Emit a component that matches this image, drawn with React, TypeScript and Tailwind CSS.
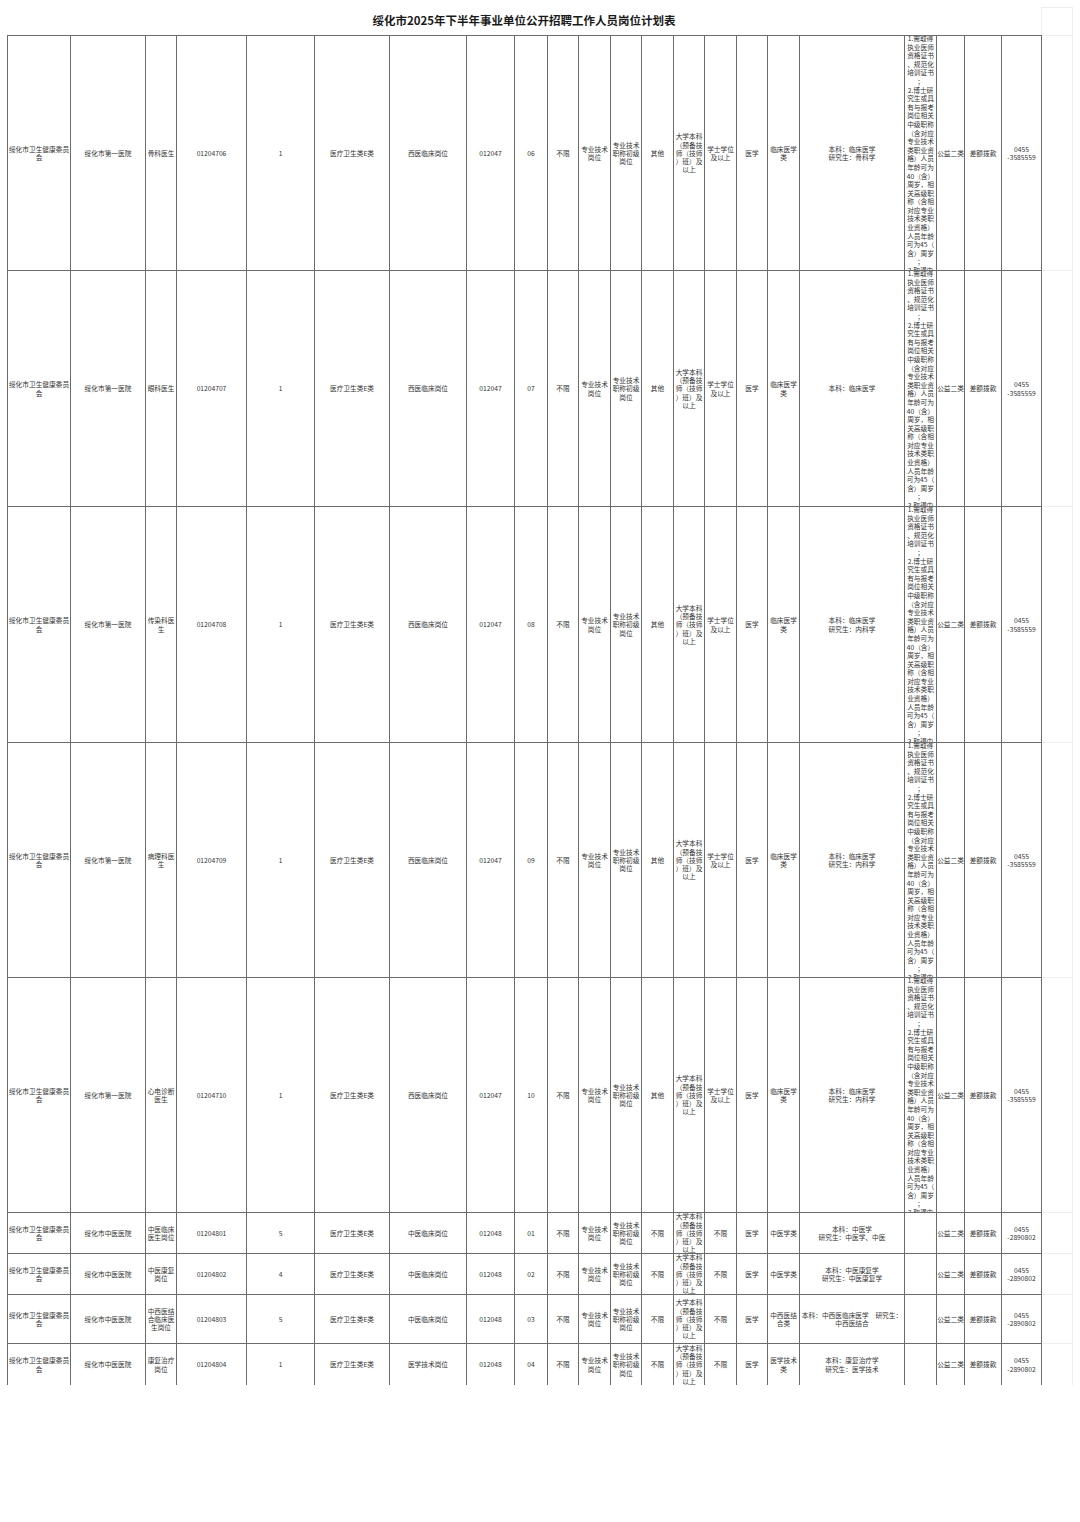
import type { FC } from "react";

type Row = string[][];

const font = { fontFamily: '"Noto Sans CJK SC", "Noto Sans", sans-serif' };

const remark = [
  "1.需取得", "执业医师", "资格证书", "、规范化", "培训证书", "；",
  "2.博士研", "究生或具", "有与报考", "岗位相关", "中级职称", "（含对应",
  "专业技术", "类职业资", "格）人员", "年龄可为", "40（含）", "周岁，相",
  "关高级职", "称（含相", "对应专业", "技术类职", "业资格）", "人员年龄",
  "可为45（", "含）周岁", "；", "3.取得中",
];

const edu = ["大学本科", "（预备技", "师（技师", "）班）及", "以上"];
const dept = ["绥化市卫生健康委员", "会"];

const first = (post: string[], code: string, seq: string, major: string[]): Row => [
  dept, ["绥化市第一医院"], post, [code], ["1"], ["医疗卫生类E类"], ["西医临床岗位"], ["012047"], [seq],
  ["不限"], ["专业技术", "岗位"], ["专业技术", "职称初级", "岗位"], ["其他"], edu, ["学士学位", "及以上"],
  ["医学"], ["临床医学", "类"], major, remark, ["公益二类"], ["差额拨款"], ["0455", "-3585559"], [],
];

const second = (post: string[], code: string, n: string, kind: string, seq: string, cat: string[], major: string[]): Row => [
  dept, ["绥化市中医医院"], post, [code], [n], ["医疗卫生类E类"], [kind], ["012048"], [seq],
  ["不限"], ["专业技术", "岗位"], ["专业技术", "职称初级", "岗位"], ["不限"], edu, ["不限"],
  ["医学"], cat, major, [], ["公益二类"], ["差额拨款"], ["0455", "-2890802"], [],
];

const rows: Row[] = [
  first(["骨科医生"], "01204706", "06", ["本科：临床医学", "研究生：骨科学"]),
  first(["眼科医生"], "01204707", "07", ["本科：临床医学"]),
  first(["传染科医", "生"], "01204708", "08", ["本科：临床医学", "研究生：内科学"]),
  first(["病理科医", "生"], "01204709", "09", ["本科：临床医学", "研究生：内科学"]),
  first(["心电诊断", "医生"], "01204710", "10", ["本科：临床医学", "研究生：内科学"]),
  second(["中医临床", "医生岗位"], "01204801", "5", "中医临床岗位", "01", ["中医学类"], ["本科：中医学", "研究生：中医学、中医"]),
  second(["中医康复", "岗位"], "01204802", "4", "中医临床岗位", "02", ["中医学类"], ["本科：中医康复学", "研究生：中医康复学"]),
  second(["中西医结", "合临床医", "生岗位"], "01204803", "5", "中医临床岗位", "03", ["中西医结", "合类"], ["本科：中西医临床医学　研究生：", "中西医结合"]),
  second(["康复治疗", "岗位"], "01204804", "1", "医学技术岗位", "04", ["医学技术", "类"], ["本科：康复治疗学", "研究生：医学技术"]),
];

interface CellProps {
  lines: string[];
  col: number;
  row: number;
}

const Cell: FC<CellProps> = ({ lines, col, row }) => {
  const faint = col === 22;
  const isRemark = col === 18 && lines.length > 10;
  return (
    <div
      className={[
        "flex flex-col items-center overflow-hidden text-center border-r",
        isRemark ? "justify-start" : "justify-center",
        faint ? "border-[#eeeeee]" : "border-[#6b6b6b]",
        row < rows.length - 1 ? "border-b" : "",
        row === 0 ? "border-t" : "",
        col === 0 ? "border-l" : "",
      ].join(" ")}
    >
      <div className={isRemark ? "mt-[-2px] leading-[8.6px]" : ""}>
        {lines.map((l, i) => (
          <div key={i} className="whitespace-pre">{l}</div>
        ))}
      </div>
    </div>
  );
};

export default function App() {
  return (
    <div className="bg-white w-[1080px] h-[1522px] pt-[7px] pl-[7px] text-[#333]" style={font}>
      <div className="flex h-[28px]">
        <div className="w-[1034px] flex items-center justify-center text-[11.5px] font-bold text-[#1a1a1a]">
          绥化市2025年下半年事业单位公开招聘工作人员岗位计划表
        </div>
        <div className="w-[32px] border-t border-l border-r border-[#eeeeee]" />
      </div>
      <div className="grid w-[1066px] grid-cols-[64px_75px_31px_70px_68px_75px_77px_48px_33px_31px_32px_31px_32px_31px_32px_31px_32px_105px_32px_28px_37px_40px_31px] grid-rows-[236px_236px_236px_235px_235px_41px_41px_49px_41px] text-[6.7px] leading-[8.3px]">
        {rows.map((r, ri) => r.map((lines, ci) => <Cell key={`${ri}-${ci}`} lines={lines} col={ci} row={ri} />))}
      </div>
    </div>
  );
}
